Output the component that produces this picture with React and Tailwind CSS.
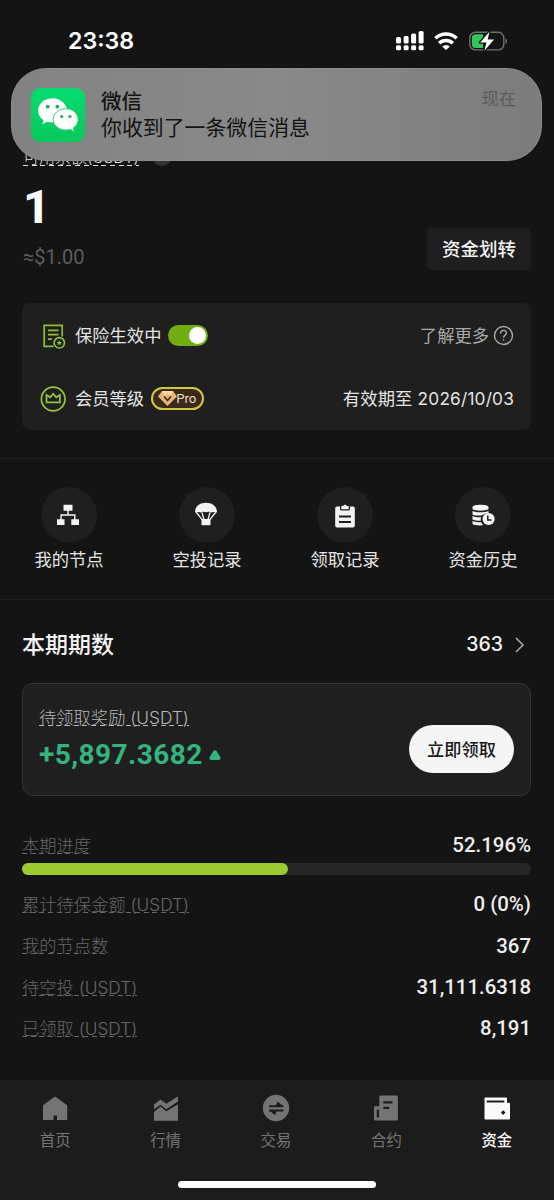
import clsx from "clsx";

const actions = [
  { label: "我的节点", icon: NodesIcon },
  { label: "空投记录", icon: ParachuteIcon },
  { label: "领取记录", icon: ClipboardIcon },
  { label: "资金历史", icon: HistoryIcon }
];

const stats = [
  { label: "累计待保金额 (USDT)", value: "0 (0%)" },
  { label: "我的节点数", value: "367" },
  { label: "待空投 (USDT)", value: "31,111.6318" },
  { label: "已领取 (USDT)", value: "8,191" }
];

const tabs = [
  { label: "首页", icon: HomeIcon },
  { label: "行情", icon: MarketIcon },
  { label: "交易", icon: TradeIcon },
  { label: "合约", icon: ContractIcon },
  { label: "资金", icon: WalletIcon, active: true }
];

const progress = 52.196;

function App() {
  return (
    <div className="relative flex h-[1200px] w-[554px] flex-col overflow-hidden bg-[#141414] font-['Inter','Noto_Sans_CJK_SC',sans-serif] text-[17.3px] leading-none text-[#e4e4e4]">
      <StatusBar />
      <Notification />
      <Balance />
      <Membership />

      {/* Shortcuts */}
      <section className="mt-[28px] grid h-[142px] grid-cols-4 border-y border-[#222222] pr-[2px] pt-[28px]">
        {actions.map(({ label, icon: Icon }) => (
          <button className="flex flex-col items-center" key={label} type="button">
            <span className="grid size-14 place-items-center rounded-full bg-[#1f1f1f] text-[#f4f4f4]">
              <Icon />
            </span>
            <span className="mt-[7px] leading-5">{label}</span>
          </button>
        ))}
      </section>

      <Period />

      {/* Tab bar */}
      <nav className="flex h-[120px] shrink-0 flex-col items-center bg-[#1c1c1c]">
        <div className="grid w-full grid-cols-5 pr-[2px] pt-[13px]">
          {tabs.map(({ label, icon: Icon, active }) => (
            <button
              className={clsx(
                "flex flex-col items-center text-[15.4px]",
                active ? "font-medium text-[#fafafa]" : "text-[#747474]"
              )}
              key={label}
              type="button"
            >
              <Icon />
              <span className="mt-[8px] leading-5">{label}</span>
            </button>
          ))}
        </div>
        <div className="mt-[30px] h-[7px] w-[198px] rounded-full bg-white" />
      </nav>
    </div>
  );
}

function StatusBar() {
  return (
    <header className="flex h-[82px] shrink-0 justify-between pl-[68px] pr-[46px] text-white">
      <span className="h-6 pt-[30px] text-[23.2px] font-semibold">23:38</span>
      <div className="flex h-[82px] items-center gap-[10px]">
        <svg width="28" height="20" viewBox="0 0 28 20" fill="currentColor">
          <rect x="0" y="6" width="5" height="6.5" rx="1.5" />
          <rect x="7.6" y="5" width="5" height="7.5" rx="1.5" />
          <rect x="15.1" y="2.5" width="5" height="10" rx="1.5" />
          <rect x="22.6" y="0" width="5" height="12.5" rx="1.5" />
          <rect x="0" y="14.2" width="5" height="5" rx="1.5" />
          <rect x="7.6" y="14.2" width="5" height="5" rx="1.5" />
          <rect x="15.1" y="14.2" width="5" height="5" rx="1.5" />
          <rect x="22.6" y="14.2" width="5" height="5" rx="1.5" />
        </svg>
        <svg width="24" height="18" viewBox="0 0 24 18" fill="none" stroke="currentColor" strokeWidth="3.6">
          <path d="M1.4 6.3a15.400 15.400 0 0 1 21.200 0" />
          <path d="M5.200 11.200a9.800 9.800 0 0 1 13.600 0" />
          <path d="M12 18 8.200 14.500a5.300 5.300 0 0 1 7.600 0z" fill="currentColor" stroke="none" />
        </svg>
        <svg width="40" height="22" viewBox="0 0 40 22">
          <rect x="1.800" y="2.300" width="34" height="17.600" rx="5.600" fill="none" stroke="#707070" strokeWidth="1.400" />
          <path d="M7.500 4.300H15v13.600H7.500a3.600 3.600 0 0 1-3.600-3.600V7.900a3.600 3.600 0 0 1 3.600-3.600z" fill="#32c759" />
          <path d="M37.500 8.200c2 1 2 4.600 0 5.800z" fill="#707070" />
          <path
            d="M21.400 1.800 12.200 12.400h6.200l-2 8.300 9.600-11.200h-6.300z"
            fill="#fff"
            stroke="#141414"
            strokeWidth="2.600"
            strokeLinejoin="round"
            paintOrder="stroke"
          />
        </svg>
      </div>
    </header>
  );
}

function Notification() {
  return (
    <div className="absolute left-[11px] top-[68px] z-10 flex h-[93px] w-[531px] rounded-[35px] border border-[#8c8c8c] bg-linear-to-r from-[#828282] via-[#898989] to-[#7c7c7c] pl-[19px] pr-[25px] text-[#131313]">
      <svg className="mt-[19px] shrink-0" width="54" height="54" viewBox="0 0 54 54">
        <defs>
          <linearGradient id="wechat" x2="0" y2="1">
            <stop stopColor="#05dc70" />
            <stop offset="1" stopColor="#07c85b" />
          </linearGradient>
        </defs>
        <rect width="54" height="54" rx="9" fill="url(#wechat)" />
        <path
          d="M21.500 10.300c-8.200 0-14.500 5.400-14.500 12.300 0 4 2.100 7.300 5.500 9.600l-1.200 4 4.900-2.400c1.700.5 3.400.8 5.300.8 8.200 0 14.300-5.300 14.300-12s-6.100-12.300-14.300-12.300z"
          fill="#fafffb"
        />
        <path
          d="M34.800 20.700c-7.100 0-12.600 4.800-12.600 10.700s5.500 10.600 12.600 10.600c1.600 0 3-.2 4.400-.6l4 2.200-1-3.500c3-2 4.900-5.100 4.900-8.700 0-5.900-5.300-10.700-12.300-10.700z"
          fill="#fafffb"
          stroke="#45c985"
          strokeWidth="1"
        />
        <g fill="#2fa76a">
          <circle cx="16.700" cy="18.700" r="1.900" />
          <circle cx="26.300" cy="18.700" r="1.900" />
          <circle cx="30.700" cy="28.500" r="1.600" />
          <circle cx="38.900" cy="28.500" r="1.600" />
        </g>
      </svg>
      <div className="ml-[16px] flex flex-1 flex-col pt-[20px]">
        <span className="text-[20.500px] font-medium leading-[25px]">微信</span>
        <span className="text-[20.900px] leading-[27px]">你收到了一条微信消息</span>
      </div>
      <span className="pt-[20px] leading-5 text-[#5b5b5b]">现在</span>
    </div>
  );
}

function Balance() {
  return (
    <section className="flex h-[221px] shrink-0 justify-between px-[23px] pt-[65px]">
      <div className="flex flex-col items-start">
        <div className="flex h-[20px] items-center gap-[13px] text-[16px]">
          <DashedLabel className="text-[#e0e0e0]">
            可用余额<span className="tracking-[-0.4px]">(USDT)</span>
          </DashedLabel>
          <span className="-mt-[3px] size-[20px] rounded-full bg-[#333333]" />
        </div>
        <span className="mt-[17px] font-['Roboto'] text-[47px] font-extrabold leading-[46px] text-[#fafafa]">1</span>
        <span className="mt-[15px] font-['Roboto'] text-[20px] leading-6 text-[#5c5c5c]">≈$1.00</span>
      </div>
      <button className="mt-[81px] h-[42px] w-[104px] rounded-[5px] bg-[#1f1f1f] pt-px text-[18.500px] font-medium text-[#f2f2f2]" type="button">
        资金划转
      </button>
    </section>
  );
}

function Membership() {
  return (
    <section className="mx-[22px] flex h-[127px] w-[509px] shrink-0 flex-col rounded-lg bg-[#1f1f1f] pl-[18px] pr-[17px]">
      <div className="flex h-[65px] items-center justify-between">
        <div className="flex items-center">
          <PolicyIcon />
          <span className="ml-[9px]">保险生效中</span>
          <span className="ml-[7px] flex h-[21px] w-10 items-center justify-end rounded-full bg-[#72ad12] pr-[2px]">
            <span className="size-[17px] rounded-full bg-white" />
          </span>
        </div>
        <div className="flex items-center gap-[4px] text-[#a9a9a9]">
          <span>了解更多</span>
          <svg width="21" height="21" viewBox="0 0 21 21" fill="none" stroke="currentColor" strokeWidth="1.400">
            <circle cx="10.500" cy="10.500" r="9" />
            <path d="M7.600 8.400c0-4 5.900-3.900 5.900-.3 0 2-3 2.200-3 4.600M10.500 14.200v1.500" />
          </svg>
        </div>
      </div>
      <div className="flex h-[61px] items-center justify-between">
        <div className="flex items-center">
          <CrownIcon />
          <span className="ml-[9px]">会员等级</span>
          <span className="ml-[7px] flex h-[23px] w-[53px] items-center rounded-full border-2 border-[#cfc93c] bg-[#3b2a1a] pl-[5px] text-[13.200px] text-[#f1dccb]">
            <svg className="-mr-px shrink-0" width="19" height="17" viewBox="0 0 19 17">
              <path d="M4 1h11l4 5.500L9.500 16 0 6.500z" fill="#e9b57c" />
              <path d="M4 1h11l-2.500 5-3-3-3 3z" fill="#f7d9ad" />
              <path d="m6 6.500 3.500 4 3.500-4" fill="none" stroke="#4a2f17" strokeWidth="1.800" />
            </svg>
            <span className="font-['Roboto']">Pro</span>
          </span>
        </div>
        <span className="tracking-[0.010em]">有效期至 2026/10/03</span>
      </div>
    </section>
  );
}

function Period() {
  return (
    <section className="flex flex-1 flex-col px-[22px]">
      <div className="flex h-[83px] items-center justify-between pt-[7px]">
        <h2 className="pt-px text-[23px] font-medium text-[#f2f2f2]">本期期数</h2>
        <button className="flex items-center gap-[12px] pr-[7px] text-[19.500px] font-medium text-[#f0f0f0]" type="button">
          363
          <svg width="10" height="16" viewBox="0 0 10 16" fill="none" stroke="#a5a5a5" strokeWidth="1.600">
            <path d="m1 1 7 7-7 7" />
          </svg>
        </button>
      </div>

      {/* Pending reward */}
      <div className="flex h-[113px] w-[509px] items-center justify-between rounded-[11px] border border-[#353535] bg-[#1f1f1f] px-4">
        <div className="flex flex-col items-start pt-px">
          <DashedLabel className="text-[#b6b6b6]">待领取奖励 (USDT)</DashedLabel>
          <div className="mt-[13px] flex items-center gap-[6px]">
            <span className="font-['Roboto'] text-[28px] font-bold leading-8 tracking-[0.450px] text-[#35b37e]">+5,897.3682</span>
            <svg width="12" height="10" viewBox="0 0 12 10" fill="#35b37e">
              <path d="M4.400.9q1.600-1.500 3.200 0L11.300 7q.8 2.700-1.600 3H2.300Q-.1 9.700.7 7z" />
            </svg>
          </div>
        </div>
        <button className="mt-[19px] h-12 w-[105px] rounded-full bg-[#f5f5f5] pt-px text-[17.200px] font-medium text-[#191919]" type="button">
          立即领取
        </button>
      </div>

      {/* Progress */}
      <div className="mt-[36px] flex h-[26px] w-[509px] items-center justify-between">
        <DashedLabel className="text-[#676767]">本期进度</DashedLabel>
        <Value>{progress}%</Value>
      </div>
      <div className="mt-[5px] h-3 w-[509px] rounded-full bg-[#262626]">
        <div className="h-full rounded-full bg-[#9dcb2f]" style={{ width: `${progress}%` }} />
      </div>

      <div className="mt-[9px] w-[509px]">
        {stats.map((row) => (
          <div className="flex h-[41.300px] items-center justify-between" key={row.label}>
            <DashedLabel className="text-[#676767]">{row.label}</DashedLabel>
            <Value>{row.value}</Value>
          </div>
        ))}
      </div>
    </section>
  );
}

function DashedLabel({ className, children }) {
  return (
    <span className={clsx("flex flex-col font-light", className)}>
      <span className="h-[16px] leading-[17px]">{children}</span>
      <span className="h-px bg-[repeating-linear-gradient(90deg,currentColor_0_5px,transparent_5px_8.700px)]" />
    </span>
  );
}

function Value({ children }) {
  return <span className="font-['Roboto'] text-[20.400px] font-medium text-[#eeeeee]">{children}</span>;
}

function PolicyIcon() {
  return (
    <svg width="26" height="26" viewBox="0 0 26 26" fill="none" stroke="#8fbe38" strokeWidth="1.700">
      <path d="M13.500 23.300H4.200V2.300h18v11.200M8 7.300h10.500M8 11.700h10.500M8 16.200h4" />
      <circle cx="19.300" cy="19.800" r="5.200" />
      <path d="m19.300 17.200.8 1.700 1.800.2-1.300 1.300.3 1.800-1.600-.9-1.600.9.3-1.800-1.300-1.300 1.800-.2z" fill="#8fbe38" stroke="none" />
    </svg>
  );
}

function CrownIcon() {
  return (
    <svg width="26" height="26" viewBox="0 0 26 26" fill="none" stroke="#96c63a" strokeWidth="1.700">
      <circle cx="13.200" cy="13" r="11.800" />
      <path d="M6.500 9l3.700 2.300 3-3.500 3 3.500L19.900 9v7.400H6.500z" />
    </svg>
  );
}

function NodesIcon() {
  return (
    <svg className="-ml-[3px]" width="22" height="22" viewBox="0 0 22 22" fill="currentColor">
      <path d="M6.500.8h9v6h-3.800v3.400h6.800v5H22V21h-7.700v-5.800h2.800v-3.500H4.800v3.500h2.700V21H0v-5.800h3.400v-5h6.900V6.800H6.500z" />
    </svg>
  );
}

function ParachuteIcon() {
  return (
    <svg className="-ml-[2px] -mt-[2px]" width="24" height="24" viewBox="0 0 24 24" fill="currentColor">
      <path d="M1 10C1 4.500 5.700.8 12 .8S23 4.500 23 10c0 1-1.500 1-2.500.3-1.500-1-3 .7-4.500 0-2-1.200-3 .3-4 0-1 0-2.300-1.200-4.200 0-1.400.7-2.800-1-4.300 0C2.400 11 1 11 1 10z" />
      <path d="m2.500 10.500 5.800 7.300M21.500 10.500l-5.800 7.300M8 10.500l2 7M16 10.500l-2 7" stroke="currentColor" strokeWidth="1.300" />
      <path d="M7.500 17h9v6.200h-9z" />
    </svg>
  );
}

function ClipboardIcon() {
  return (
    <svg className="mt-px" width="20" height="24" viewBox="0 0 20 24" fill="currentColor">
      <path d="M2 2.500h3v2.200c0 1.200.7 1.900 1.900 1.900h6.200c1.200 0 1.900-.7 1.900-1.900V2.500h3q1.800 0 1.800 1.800v17.400q0 1.800-1.800 1.800H2q-1.800 0-1.800-1.800V4.300Q.2 2.500 2 2.500z" />
      <path d="M6.300 2h2C8.500.4 11.500.4 11.700 2h2v3.300H6.300z" />
      <path d="M4 12.500h12M4 18h12" stroke="#1f1f1f" strokeWidth="1.800" />
    </svg>
  );
}

function HistoryIcon() {
  return (
    <svg className="-mt-px" width="23" height="22" viewBox="0 0 23 22" fill="currentColor">
      <path d="M.5 3C.5 0 16.500 0 16.500 3v2.300c-2.500 1.800-13.500 1.800-16 0z" />
      <path d="M.5 6.900c3 1.800 13 1.800 16 0v2.300c-4 .2-5.500 1.200-6.500 2.300-4 .2-8-.1-9.500-1.100z" />
      <path d="M.5 12c2 1.100 5.500 1.400 8.700 1.200-.6 1.200-.7 2.300-.5 3.500-4 0-7-.3-8.200-1.200z" />
      <path d="M.5 17.100c2 1 5 1.200 8.700 1.200.4 1.200 1 2.100 2 3-5 .3-10 .1-10.700-1.500z" />
      <circle cx="16.600" cy="15" r="6.100" />
      <path d="M15.800 11.400v4.500h3.700" fill="none" stroke="#1f1f1f" strokeWidth="1.500" />
    </svg>
  );
}

function HomeIcon() {
  return (
    <svg width="30" height="30" viewBox="0 0 30 30" fill="currentColor">
      <path d="m15 3.500 11.500 8.200q.7.500.7 1.300v14H17v-4.500h-3.500V27H3V13q0-.8.700-1.300z" />
    </svg>
  );
}

function MarketIcon() {
  return (
    <svg width="30" height="30" viewBox="0 0 30 30" fill="currentColor">
      <path d="M3 27.700V19l6.500-5.500 5.800 4.700L27 11.300v16.400z" />
      <path d="M3 16.200v-4.600l6.500-5 5.800 4.200L27 3.200v5.200l-11.700 7.800-5.800-4.500z" />
    </svg>
  );
}

function TradeIcon() {
  return (
    <svg width="30" height="30" viewBox="0 0 30 30">
      <circle cx="15" cy="15" r="13.200" fill="currentColor" />
      <path d="M8 13.200h14.500M8 17.500h14.500" stroke="#1c1c1c" strokeWidth="2" />
      <path d="m14.500 13.200 2.200-4.700 5.300 4.700zM8.500 17.500l5.500 4.700 2-4.700z" fill="#1c1c1c" />
    </svg>
  );
}

function ContractIcon() {
  return (
    <svg width="30" height="30" viewBox="0 0 30 30">
      <path d="M8.300 3.800Q8.300 2.500 9.600 2.500h16q1.300 0 1.300 1.300v22.500q0 1.300-1.300 1.300H4.300Q3 27.600 3 26.300V14.500q0-1.200 1.200-1.200h4.100z" fill="currentColor" />
      <path d="M12.300 9.300h9.200M12.300 14.800h6M6.900 16.500v8" stroke="#1c1c1c" strokeWidth="2.300" />
    </svg>
  );
}

function WalletIcon() {
  return (
    <svg width="30" height="30" viewBox="0 0 30 30">
      <path d="M2.500 5.300q0-.8.800-.8h20.900q.8 0 .8.800v4.500h2.200q.8 0 .8.800v15q0 .9-.8.900H3.300q-.8 0-.8-.9z" fill="currentColor" />
      <path d="M4.800 8.500h17.500" stroke="#1c1c1c" strokeWidth="2" />
      <path d="m21.200 17.200 2.300 2.400-2.300 2.400-2.300-2.400z" fill="#1c1c1c" />
    </svg>
  );
}

export default App;
